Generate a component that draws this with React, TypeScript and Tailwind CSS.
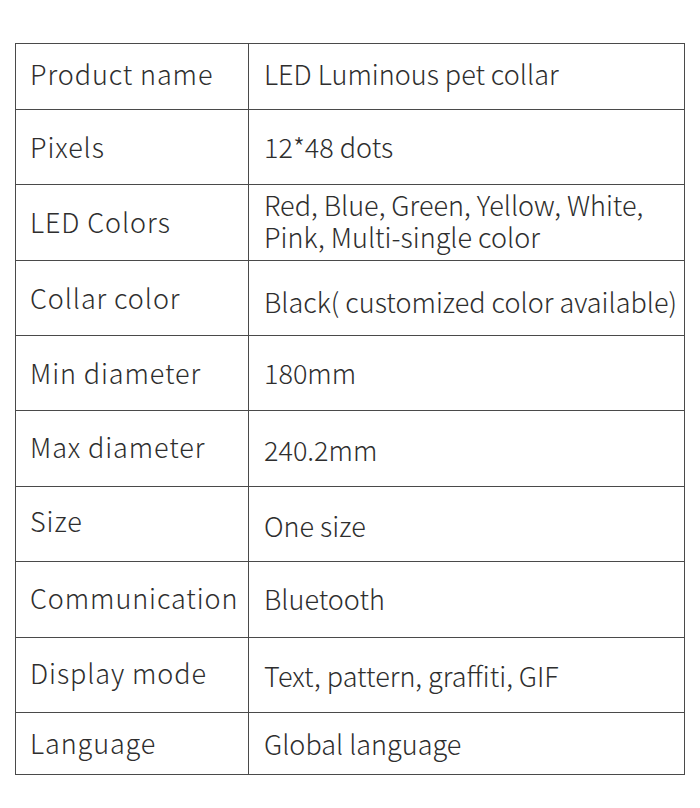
import React from "react";

const rows: { label: string; value: React.ReactNode; h: string; pad?: string; vpad?: string }[] = [
  { label: "Product name", value: "LED Luminous pet collar", h: "h-[66px]", pad: "pb-[5px]", vpad: "pb-[5px]" },
  { label: "Pixels", value: "12*48 dots", h: "h-[75px]" },
  {
    label: "LED Colors",
    value: (
      <>
        Red, Blue, Green, Yellow, White,
        <br />
        Pink, Multi-single color
      </>
    ),
    h: "h-[76px]",
    vpad: "pb-[3px]",
  },
  { label: "Collar color", value: "Black( customized color available)", h: "h-[75px]", vpad: "pt-[8px]" },
  { label: "Min diameter", value: "180mm", h: "h-[75px]" },
  { label: "Max diameter", value: "240.2mm", h: "h-[76px]", pad: "pb-[2px]", vpad: "pt-[2px]" },
  { label: "Size", value: "One size", h: "h-[75px]", pad: "pb-[5px]", vpad: "pt-[4px]" },
  { label: "Communication", value: "Bluetooth", h: "h-[76px]", pad: "pb-[2px]", vpad: "pb-[2px]" },
  { label: "Display mode", value: "Text, pattern, graffiti, GIF", h: "h-[75px]", pad: "pb-[4px]", vpad: "pt-[2px]" },
  { label: "Language", value: "Global language", h: "h-[62px]" },
];

export default function App() {
  return (
    <div
      className="w-[700px] h-[808px] bg-white pt-[43px] pl-[15px]"
      style={{ fontFamily: '"Noto Sans CJK SC", "Noto Sans", sans-serif' }}
    >
      <div className="w-[670px] border-t border-l border-[#4a4a4a] text-[#2e2e2e] text-[27px] font-light">
        {rows.map((r, i) => (
          <div key={i} className={`flex ${r.h}`}>
            <div
              className={`w-[233px] border-r border-b border-[#4a4a4a] flex items-center pl-[14px] tracking-[0.9px] ${r.pad ?? ""}`}
            >
              {r.label}
            </div>
            <div
              className={`flex-1 border-r border-b border-[#4a4a4a] flex items-center pl-[15px] leading-[32px] ${r.vpad ?? ""}`}
            >
              <span>{r.value}</span>
            </div>
          </div>
        ))}
      </div>
    </div>
  );
}
